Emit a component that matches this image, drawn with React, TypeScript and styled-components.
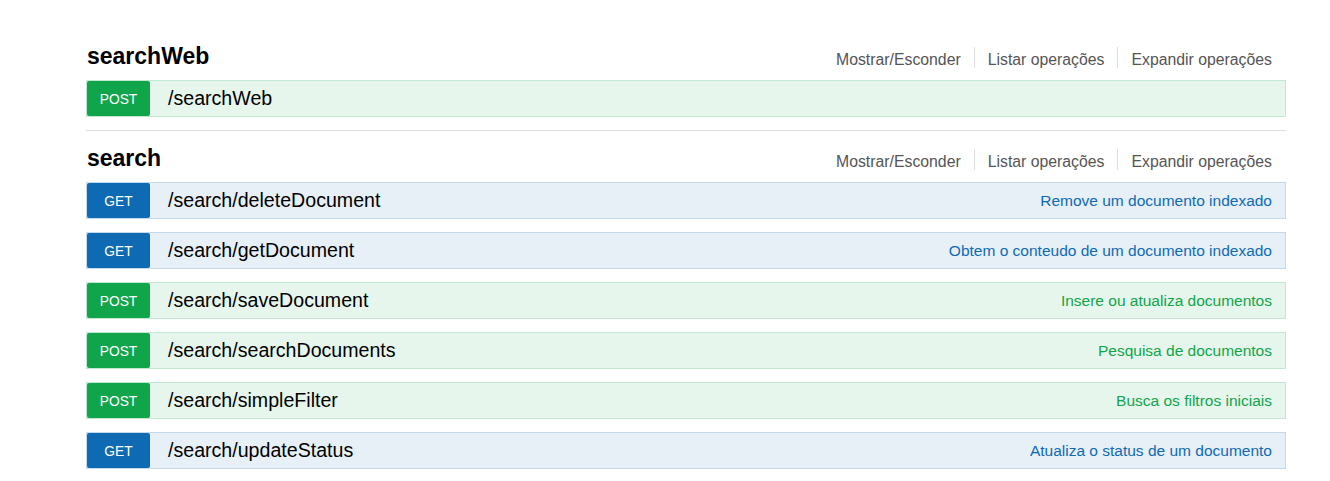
import styled, { createGlobalStyle } from "styled-components";

type Method = "GET" | "POST";

interface Operation {
  method: Method;
  path: string;
  summary?: string;
}

interface Resource {
  name: string;
  operations: Operation[];
}

const resources: Resource[] = [
  {
    name: "searchWeb",
    operations: [{ method: "POST", path: "/searchWeb" }],
  },
  {
    name: "search",
    operations: [
      { method: "GET", path: "/search/deleteDocument", summary: "Remove um documento indexado" },
      { method: "GET", path: "/search/getDocument", summary: "Obtem o conteudo de um documento indexado" },
      { method: "POST", path: "/search/saveDocument", summary: "Insere ou atualiza documentos" },
      { method: "POST", path: "/search/searchDocuments", summary: "Pesquisa de documentos" },
      { method: "POST", path: "/search/simpleFilter", summary: "Busca os filtros iniciais" },
      { method: "GET", path: "/search/updateStatus", summary: "Atualiza o status de um documento" },
    ],
  },
];

const palette = {
  GET: { main: "#0f6ab4", bg: "#e7f0f7", border: "#c3d9ec" },
  POST: { main: "#10a54a", bg: "#e7f6ec", border: "#c3e8d1" },
};

export default function App() {
  return (
    <>
      <GlobalStyle />
      <Page>
        {resources.map((res, i) => (
          <Section key={res.name} $first={i === 0}>
            <Heading>
              <Title>{res.name}</Title>
              <Options>
                <Option>Mostrar/Esconder</Option>
                <Option>Listar operações</Option>
                <Option $last>Expandir operações</Option>
              </Options>
            </Heading>
            <OpList>
              {res.operations.map((op) => (
                <OpRow key={op.path} $method={op.method}>
                  <Badge $method={op.method}>{op.method}</Badge>
                  <Path>{op.path}</Path>
                  {op.summary && <Summary $method={op.method}>{op.summary}</Summary>}
                </OpRow>
              ))}
            </OpList>
          </Section>
        ))}
      </Page>
    </>
  );
}

const GlobalStyle = createGlobalStyle`
  body {
    margin: 0;
    background: #ffffff;
    font-family: "Liberation Sans", Arial, sans-serif;
  }
`;

const Page = styled.div`
  width: 1200px;
  padding: 0 0 0 86px;
`;

const Section = styled.div<{ $first: boolean }>`
  padding-top: 14px;
  margin-top: ${(p) => (p.$first ? "29px" : "0")};
  border-top: ${(p) => (p.$first ? "none" : "1px solid #dddddd")};
`;

const Heading = styled.div`
  display: flex;
  justify-content: space-between;
  align-items: flex-start;
  height: 37px;
`;

const Title = styled.h2`
  margin: 1px 0 0 1px;
  font-size: 23px;
  line-height: 24px;
  font-weight: bold;
  color: #000000;
`;

const Options = styled.ul`
  display: flex;
  margin: 4px 0 0;
  padding: 0;
  list-style: none;
`;

const Option = styled.li<{ $last?: boolean }>`
  padding: 5px ${(p) => (p.$last ? "14px" : "13px")} 1px 13px;
  line-height: 15px;
  font-size: 15.8px;
  color: #555555;
  border-right: ${(p) => (p.$last ? "none" : "1px solid #dddddd")};
`;

const OpList = styled.div`
  display: flex;
  flex-direction: column;
  gap: 13px;
  padding-bottom: 13px;
`;

const OpRow = styled.div<{ $method: Method }>`
  display: flex;
  align-items: stretch;
  height: 35px;
  background: ${(p) => palette[p.$method].bg};
  border: 1px solid ${(p) => palette[p.$method].border};
`;

const Badge = styled.span<{ $method: Method }>`
  flex: none;
  width: 63px;
  padding-top: 2px;
  box-sizing: border-box;
  background: ${(p) => palette[p.$method].main};
  border-radius: 2px;
  color: #ffffff;
  font-size: 13.8px;
  line-height: 33px;
  text-align: center;
`;

const Path = styled.span`
  margin-left: 18px;
  font-size: 19.6px;
  line-height: 35px;
  color: #000000;
`;

const Summary = styled.span<{ $method: Method }>`
  margin-left: auto;
  padding: 1px 13px 0 0;
  font-size: 15.5px;
  line-height: 34px;
  color: ${(p) => palette[p.$method].main};
`;
